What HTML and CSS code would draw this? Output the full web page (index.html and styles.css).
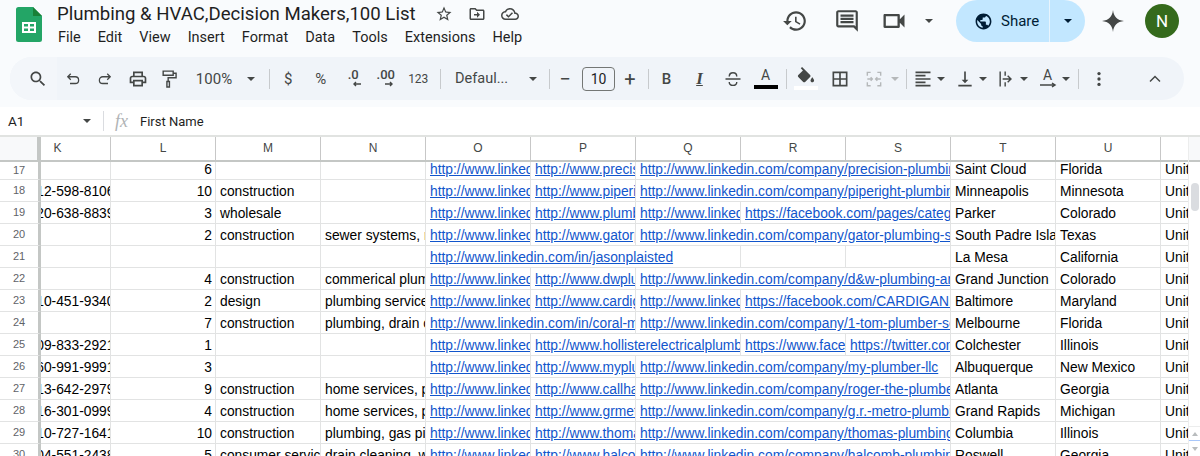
FILE: index.html
```html
<!DOCTYPE html>
<html>
<head>
  <meta charset="utf-8">
  <title>Plumbing &amp; HVAC,Decision Makers,100 List</title>
  <link rel="stylesheet" href="styles.css">
</head>
<body>
  <!-- title and menus -->
  <div class="top">
    <svg class="logo" viewBox="0 0 26 35">
      <path fill="#23a566" d="M2.500 0H17l9 9v23.500a2.500 2.500 0 0 1-2.500 2.500h-21A2.500 2.500 0 0 1 0 32.500v-30A2.500 2.500 0 0 1 2.500 0z"/>
      <path fill="#188038" d="M17 0l9 9h-9z"/>
      <path fill="#fff" d="M6 15h14v11H6zm2 2v2.500h4V17zm6 0v2.500h4V17zm-6 4.500V24h4v-2.500zm6 0V24h4v-2.500z"/>
    </svg>
    <div class="title-block">
      <div class="title-line">
        <span class="doc-title">Plumbing &amp; HVAC,Decision Makers,100 List</span>
        <svg class="title-icon" viewBox="0 0 24 24"><path d="M22 9.240l-7.190-.62L12 2 9.190 8.630 2 9.240l5.460 4.730L5.820 21 12 17.270 18.180 21l-1.630-7.030L22 9.240zM12 15.400l-3.760 2.270 1-4.280-3.320-2.880 4.380-.38L12 6.100l1.710 4.040 4.380.38-3.320 2.880 1 4.280L12 15.400z"/></svg>
        <svg class="title-icon" viewBox="0 0 24 24"><path d="M20 6h-8l-2-2H4c-1.100 0-2 .9-2 2v12c0 1.100.9 2 2 2h16c1.100 0 2-.9 2-2V8c0-1.100-.9-2-2-2zm0 12H4V6h5.170l2 2H20v10zm-8-4H8v-2h4V9l4 4-4 4v-3z"/></svg>
        <svg class="title-icon" viewBox="0 0 24 24"><path d="M19.350 10.040C18.670 6.590 15.640 4 12 4 9.110 4 6.600 5.640 5.350 8.040 2.340 8.360 0 10.910 0 14c0 3.310 2.690 6 6 6h13c2.760 0 5-2.240 5-5 0-2.640-2.050-4.780-4.650-4.960zM19 18H6c-2.210 0-4-1.790-4-4 0-2.050 1.530-3.760 3.560-3.970l1.070-.11.5-.95C8.080 7.140 9.940 6 12 6c2.620 0 4.880 1.860 5.390 4.430l.3 1.500 1.530.11c1.560.1 2.780 1.410 2.780 2.960 0 1.650-1.350 3-3 3zm-9-3.820l-2.090-2.090L6.500 13.500 10 17l6.010-6.010-1.410-1.410z"/></svg>
      </div>
      <div class="menu">
        <span>File</span><span>Edit</span><span>View</span><span>Insert</span><span>Format</span><span>Data</span><span>Tools</span><span>Extensions</span><span>Help</span>
      </div>
    </div>
    <div class="actions">
      <svg class="act-icon history" viewBox="0 0 24 24"><path d="M13 3c-4.970 0-9 4.030-9 9H1l3.890 3.890.07.14L9 12H6c0-3.870 3.130-7 7-7s7 3.130 7 7-3.130 7-7 7c-1.930 0-3.680-.79-4.940-2.060l-1.420 1.420C8.270 19.990 10.510 21 13 21c4.970 0 9-4.030 9-9s-4.030-9-9-9zm-1 5v5l4.280 2.540.72-1.210-3.500-2.080V8H12z"/></svg>
      <svg class="act-icon comment" viewBox="0 0 24 24"><path d="M20 2H4c-1.100 0-2 .9-2 2v12c0 1.100.9 2 2 2h14l4 4V4c0-1.100-.9-2-2-2zm0 15.170L18.830 16H4V4h16v13.170zM6 12h12v2H6zm0-3h12v2H6zm0-3h12v2H6z"/></svg>
      <svg class="act-icon video" viewBox="0 0 24 24"><path d="M15 8v8H5V8h10m1-2H4c-.55 0-1 .45-1 1v10c0 .55.45 1 1 1h12c.55 0 1-.45 1-1v-3.500l4 4v-11l-4 4V7c0-.55-.45-1-1-1z"/></svg>
      <span class="caret video-caret"></span>
      <div class="share">
        <div class="share-main">
          <svg viewBox="0 0 24 24"><path d="M12 2C6.480 2 2 6.480 2 12s4.480 10 10 10 10-4.480 10-10S17.520 2 12 2zm-1 17.930c-3.950-.49-7-3.850-7-7.930 0-.62.08-1.210.21-1.790L9 15v1c0 1.100.9 2 2 2v1.930zm6.900-2.540c-.26-.81-1-1.390-1.900-1.390h-1v-3c0-.55-.45-1-1-1H8v-2h2c.55 0 1-.45 1-1V7h2c1.100 0 2-.9 2-2v-.41c2.930 1.190 5 4.060 5 7.410 0 2.080-.8 3.970-2.100 5.390z"/></svg>
          <span>Share</span>
        </div>
        <div class="share-more"><span class="caret dark"></span></div>
      </div>
      <svg class="spark" viewBox="0 0 24 24"><path d="M12 1C12.800 7.800 16.200 11.200 23 12C16.200 12.800 12.800 16.200 12 23C11.200 16.200 7.800 12.800 1 12C7.800 11.200 11.200 7.800 12 1z"/></svg>
      <div class="avatar">N</div>
    </div>
  </div>

  <!-- toolbar -->
  <div class="toolbar">
    <div class="group g1">
      <div class="tb search-slot"><svg class="ic" viewBox="0 0 24 24"><path d="M15.500 14h-.79l-.28-.27C15.410 12.590 16 11.110 16 9.500 16 5.910 13.090 3 9.500 3S3 5.910 3 9.500 5.910 16 9.500 16c1.610 0 3.090-.59 4.230-1.570l.27.28v.79l5 4.990L20.490 19l-4.990-5zm-6 0C7.010 14 5 11.990 5 9.500S7.010 5 9.500 5 14 7.010 14 9.500 11.990 14 9.500 14z"/></svg></div>
      <div class="tb w32"><svg class="ic line small" viewBox="0 0 24 24"><path d="M9 5L5 9l4 4M5 9h10a4.500 4.500 0 0 1 0 9H8"/></svg></div>
      <div class="tb w32"><svg class="ic line small" viewBox="0 0 24 24"><path d="M15 5l4 4-4 4M19 9H9a4.500 4.500 0 0 0 0 9h7"/></svg></div>
      <div class="tb w33"><svg class="ic" viewBox="0 0 24 24"><path d="M19 8h-1V3H6v5H5c-1.660 0-3 1.340-3 3v6h4v4h12v-4h4v-6c0-1.660-1.340-3-3-3zM8 5h8v3H8V5zm8 12v2H8v-4h8v2zm2-2v-2H6v2H4v-4c0-.55.45-1 1-1h14c.55 0 1 .45 1 1v4h-2z"/></svg></div>
      <div class="tb w30"><svg class="ic line" viewBox="0 0 24 24"><path d="M5 2.500h12v5H5zM17 5h3.500v5.500H11V15M9.500 15h3v6.500h-3z"/></svg></div>
      <div class="tb zoom-val">100%</div>
      <div class="tb w8"><span class="caret"></span></div>
    </div>
    <div class="sep"></div>
    <div class="group g2">
      <div class="tb w325 sym">$</div>
      <div class="tb w325 sym">%</div>
      <div class="tb w325 dec"><span>.0</span><svg class="arrow-l" viewBox="0 0 10 6"><path d="M9 3H2M4 1L2 3l2 2"/></svg></div>
      <div class="tb w325 dec"><span>.00</span><svg class="arrow-r" viewBox="0 0 10 6"><path d="M1 3h7M6 1l2 2-2 2"/></svg></div>
      <div class="tb w325 num">123</div>
    </div>
    <div class="sep"></div>
    <div class="group g3">
      <div class="tb font-name">Defaul...</div>
      <div class="tb w16"><span class="caret"></span></div>
    </div>
    <div class="sep"></div>
    <div class="group g4">
      <div class="tb w30 pm">&minus;</div>
      <div class="size-box">10</div>
      <div class="tb w30 pm">+</div>
    </div>
    <div class="sep"></div>
    <div class="group g5">
      <div class="tb w33 fmt bold">B</div>
      <div class="tb w33 fmt ital">I</div>
      <div class="tb w33"><svg class="ic line" viewBox="0 0 24 24"><path d="M3 12h18M7.500 9c0-6 9-6 9 0M7.500 15.500c0 5.500 9 5.500 9 0"/></svg></div>
      <div class="tb w33 color-a"><span>A</span><i></i></div>
    </div>
    <div class="sep"></div>
    <div class="group g6">
      <div class="tb w34 fill">
        <svg viewBox="0 0 24 20"><path d="M16.560 8.940L7.620 0 6.210 1.410l2.380 2.380-5.150 5.150c-.59.59-.59 1.540 0 2.120l5.500 5.500c.29.29.68.44 1.060.44s.77-.15 1.060-.44l5.500-5.500c.59-.58.59-1.530 0-2.120zM19 11.500s-2 2.170-2 3.500c0 1.100.9 2 2 2s2-.9 2-2c0-1.330-2-3.500-2-3.500z"/></svg>
        <i></i>
      </div>
      <div class="tb w34"><svg class="ic" viewBox="0 0 24 24"><path d="M3 3v18h18V3H3zm8 16H5v-6h6v6zm0-8H5V5h6v6zm8 8h-6v-6h6v6zm0-8h-6V5h6v6z"/></svg></div>
      <div class="tb w34"><svg class="ic line off" viewBox="0 0 24 24"><path d="M8 4H4v4M8 20H4v-4M16 4h4v4M16 20h4v-4M4 12h6M8 10l2 2-2 2M20 12h-6M16 10l-2 2 2 2"/></svg></div>
      <div class="tb w8"><span class="caret off"></span></div>
    </div>
    <div class="sep"></div>
    <div class="group g7">
      <div class="pick">
        <svg class="ic" viewBox="0 0 24 24"><path d="M15 15H3v2h12v-2zm0-8H3v2h12V7zM3 13h18v-2H3v2zm0 8h18v-2H3v2zM3 3v2h18V3H3z"/></svg>
        <span class="caret"></span>
      </div>
      <div class="pick">
        <svg class="ic" viewBox="0 0 24 24"><path d="M16 13h-3V3h-2v10H8l4 4 4-4zM4 19v2h16v-2H4z"/></svg>
        <span class="caret"></span>
      </div>
      <div class="pick">
        <svg class="ic line" viewBox="0 0 24 24"><path d="M5 3v18M11 3v5M11 11v2M11 16v5M8 12h10M14 8l4 4-4 4"/></svg>
        <span class="caret"></span>
      </div>
      <div class="pick">
        <div class="rotate"><span>A</span><svg viewBox="0 0 18 6"><path d="M1 3h15M13 1l3 2-3 2"/></svg></div>
        <span class="caret"></span>
      </div>
    </div>
    <div class="sep"></div>
    <div class="group g8">
      <div class="tb w40"><svg class="ic" viewBox="0 0 24 24"><circle cx="12" cy="5.500" r="2"/><circle cx="12" cy="12" r="2"/><circle cx="12" cy="18.500" r="2"/></svg></div>
      <div class="tb collapse"><svg class="ic line" viewBox="0 0 24 24"><path d="M6 15l6-6 6 6"/></svg></div>
    </div>
  </div>

  <!-- name box and formula -->
  <div class="formula-bar">
    <div class="name-box"><span>A1</span><span class="caret"></span></div>
    <div class="fx-sep"></div>
    <span class="fx">fx</span>
    <span class="formula">First Name</span>
  </div>

  <!-- sheet -->
  <div class="sheet">
    <div class="grid">
      <div class="row head">
        <div class="corner"></div>
        <div class="k-head">K</div><div>L</div><div>M</div><div>N</div><div>O</div><div>P</div><div>Q</div><div>R</div><div>S</div><div>T</div><div>U</div><div></div>
      </div>

      <div class="row first">
        <div class="rh">17</div><div class="c"></div><div class="c n">6</div><div class="c"></div><div class="c"></div>
        <div class="c"><a>http://www.linkedin.com/in/kevin</a></div>
        <div class="c"><a>http://www.precisionplumbing.com</a></div>
        <div class="c s3"><a>http://www.linkedin.com/company/precision-plumbing-inc</a></div>
        <div class="c">Saint Cloud</div><div class="c">Florida</div><div class="c">United States</div>
      </div>
      <div class="row">
        <div class="rh">18</div><div class="c ph"><span>612-598-8106</span></div><div class="c n">10</div><div class="c">construction</div><div class="c"></div>
        <div class="c"><a>http://www.linkedin.com/in/dan</a></div>
        <div class="c"><a>http://www.piperightplumbing.com</a></div>
        <div class="c s3"><a>http://www.linkedin.com/company/piperight-plumbing-inc</a></div>
        <div class="c">Minneapolis</div><div class="c">Minnesota</div><div class="c">United States</div>
      </div>
      <div class="row">
        <div class="rh">19</div><div class="c ph"><span>720-638-8839</span></div><div class="c n">3</div><div class="c">wholesale</div><div class="c"></div>
        <div class="c"><a>http://www.linkedin.com/in/mark</a></div>
        <div class="c"><a>http://www.plumbersupply.com</a></div>
        <div class="c"><a>http://www.linkedin.com/company/plumb</a></div>
        <div class="c s2"><a>https://facebook.com/pages/category/plumbing</a></div>
        <div class="c">Parker</div><div class="c">Colorado</div><div class="c">United States</div>
      </div>
      <div class="row">
        <div class="rh">20</div><div class="c"></div><div class="c n">2</div><div class="c">construction</div><div class="c">sewer systems, manholes</div>
        <div class="c"><a>http://www.linkedin.com/in/jose</a></div>
        <div class="c"><a>http://www.gatorplumbing.com</a></div>
        <div class="c s3"><a>http://www.linkedin.com/company/gator-plumbing-services</a></div>
        <div class="c">South Padre Island</div><div class="c">Texas</div><div class="c">United States</div>
      </div>
      <div class="row">
        <div class="rh">21</div><div class="c"></div><div class="c"></div><div class="c"></div><div class="c"></div>
        <div class="c s3"><a>http://www.linkedin.com/in/jasonplaisted</a></div>
        <div class="c"></div><div class="c"></div>
        <div class="c">La Mesa</div><div class="c">California</div><div class="c">United States</div>
      </div>
      <div class="row">
        <div class="rh">22</div><div class="c"></div><div class="c n">4</div><div class="c">construction</div><div class="c">commerical plumbing</div>
        <div class="c"><a>http://www.linkedin.com/in/wade</a></div>
        <div class="c"><a>http://www.dwplumbing.com</a></div>
        <div class="c s3"><a>http://www.linkedin.com/company/d&amp;w-plumbing-and-heating</a></div>
        <div class="c">Grand Junction</div><div class="c">Colorado</div><div class="c">United States</div>
      </div>
      <div class="row">
        <div class="rh">23</div><div class="c ph"><span>410-451-9340</span></div><div class="c n">2</div><div class="c">design</div><div class="c">plumbing services</div>
        <div class="c"><a>http://www.linkedin.com/in/bill</a></div>
        <div class="c"><a>http://www.cardiganplumbing.com</a></div>
        <div class="c"><a>http://www.linkedin.com/company/cardigan</a></div>
        <div class="c s2"><a>https://facebook.com/CARDIGAN.PLUMBING</a></div>
        <div class="c">Baltimore</div><div class="c">Maryland</div><div class="c">United States</div>
      </div>
      <div class="row">
        <div class="rh">24</div><div class="c"></div><div class="c n">7</div><div class="c">construction</div><div class="c">plumbing, drain cleaning</div>
        <div class="c s2"><a>http://www.linkedin.com/in/coral-mcgee</a></div>
        <div class="c s3"><a>http://www.linkedin.com/company/1-tom-plumber-services</a></div>
        <div class="c">Melbourne</div><div class="c">Florida</div><div class="c">United States</div>
      </div>
      <div class="row">
        <div class="rh">25</div><div class="c ph"><span>309-833-2921</span></div><div class="c n">1</div><div class="c"></div><div class="c"></div>
        <div class="c"><a>http://www.linkedin.com/in/rick</a></div>
        <div class="c s2"><a>http://www.hollisterelectricalplumbing.com</a></div>
        <div class="c"><a>https://www.facebook.com/hollister</a></div>
        <div class="c"><a>https://twitter.com/hollister</a></div>
        <div class="c">Colchester</div><div class="c">Illinois</div><div class="c">United States</div>
      </div>
      <div class="row">
        <div class="rh">26</div><div class="c ph"><span>560-991-9991</span></div><div class="c n">3</div><div class="c"></div><div class="c"></div>
        <div class="c"><a>http://www.linkedin.com/in/chris</a></div>
        <div class="c"><a>http://www.myplumberllc.com</a></div>
        <div class="c s3"><a>http://www.linkedin.com/company/my-plumber-llc</a></div>
        <div class="c">Albuquerque</div><div class="c">New Mexico</div><div class="c">United States</div>
      </div>
      <div class="row">
        <div class="rh">27</div><div class="c ph"><span>813-642-2979</span></div><div class="c n">9</div><div class="c">construction</div><div class="c">home services, plumbing</div>
        <div class="c"><a>http://www.linkedin.com/in/roger</a></div>
        <div class="c"><a>http://www.callhannah.com</a></div>
        <div class="c s3"><a>http://www.linkedin.com/company/roger-the-plumber-inc</a></div>
        <div class="c">Atlanta</div><div class="c">Georgia</div><div class="c">United States</div>
      </div>
      <div class="row">
        <div class="rh">28</div><div class="c ph"><span>616-301-0999</span></div><div class="c n">4</div><div class="c">construction</div><div class="c">home services, plumbing</div>
        <div class="c"><a>http://www.linkedin.com/in/greg</a></div>
        <div class="c"><a>http://www.grmetroplumbing.com</a></div>
        <div class="c s3"><a>http://www.linkedin.com/company/g.r.-metro-plumbing-inc</a></div>
        <div class="c">Grand Rapids</div><div class="c">Michigan</div><div class="c">United States</div>
      </div>
      <div class="row">
        <div class="rh">29</div><div class="c ph"><span>410-727-1641</span></div><div class="c n">10</div><div class="c">construction</div><div class="c">plumbing, gas piping</div>
        <div class="c"><a>http://www.linkedin.com/in/tom</a></div>
        <div class="c"><a>http://www.thomasplumbing.com</a></div>
        <div class="c s3"><a>http://www.linkedin.com/company/thomas-plumbing-inc</a></div>
        <div class="c">Columbia</div><div class="c">Illinois</div><div class="c">United States</div>
      </div>
      <div class="row">
        <div class="rh">30</div><div class="c ph"><span>404-551-2438</span></div><div class="c n">5</div><div class="c">consumer services</div><div class="c">drain cleaning, water</div>
        <div class="c"><a>http://www.linkedin.com/in/sam</a></div>
        <div class="c"><a>http://www.halcombplumbing.com</a></div>
        <div class="c s3"><a>http://www.linkedin.com/company/halcomb-plumbing-inc</a></div>
        <div class="c">Roswell</div><div class="c">Georgia</div><div class="c">United States</div>
      </div>
    </div>

    <div class="scrollbar">
      <div class="sb-head"></div>
      <div class="thumb"></div>
      <div class="sb-arrows">
        <span class="arrow-up"></span>
        <span class="sb-mark"></span>
        <span class="arrow-down"></span>
      </div>
    </div>
  </div>
</body>
</html>
```
FILE: styles.css
```css
html, body {
  margin: 0;
  height: 456px;
  overflow: hidden;
  background-color: #f9fbfd;
  font-family: Roboto, "Liberation Sans", sans-serif;
  color: #1f1f1f;
}

/* title row */
.top {
  display: flex;
  height: 57px;
}

.logo {
  width: 26px;
  height: 35px;
  margin: 7px 0 0 16px;
}

.title-block {
  margin-left: 15px;
}

.title-line {
  display: flex;
  align-items: center;
  height: 28px;
}

.doc-title {
  font-size: 18.600px;
  width: 359px;
  white-space: nowrap;
}

.title-icon {
  width: 18px;
  height: 18px;
  margin-right: 15px;
  fill: #444746;
}

.title-line .doc-title + .title-icon {
  margin-left: 19px;
}

.menu {
  display: flex;
  gap: 17px;
  font-size: 14.500px;
  line-height: 16px;
  margin: 2px 0 0 1px;
}

.actions {
  position: absolute;
  top: 0;
  left: 782px;
  display: flex;
  align-items: center;
  height: 42px;
}

.act-icon {
  width: 26px;
  height: 26px;
  fill: #444746;
  flex-shrink: 0;
}

.comment {
  margin-left: 26px;
}

.video {
  margin-left: 20px;
  width: 28px;
  height: 28px;
}

.video-caret {
  margin-left: 17px;
}

.share {
  display: flex;
  width: 129px;
  height: 42px;
  margin-left: 23px;
  border-radius: 21px;
  overflow: hidden;
  background-color: #c2e7ff;
  color: #001d35;
  font-size: 15px;
}

.share-main {
  display: flex;
  align-items: center;
  gap: 8px;
  width: 94px;
  padding-left: 18px;
  box-sizing: border-box;
  border-right: 1px solid #e8f4fd;
}

.share-main svg {
  width: 19px;
  height: 19px;
  fill: #001d35;
}

.share-more {
  flex: 1;
  display: flex;
  align-items: center;
  justify-content: center;
}

.spark {
  width: 24px;
  height: 24px;
  margin-left: 16px;
  fill: #444746;
}

.avatar {
  width: 34px;
  height: 34px;
  margin-left: 20px;
  border-radius: 50%;
  background-color: #356a1c;
  color: #fff;
  font-size: 17px;
  line-height: 34px;
  text-align: center;
}

.caret {
  display: inline-block;
  width: 0;
  height: 0;
  border-left: 4px solid transparent;
  border-right: 4px solid transparent;
  border-top: 4px solid #444746;
}

.caret.dark {
  border-top-color: #001d35;
}

.caret.off {
  border-top-color: #b5b8ba;
}

/* toolbar */
.toolbar {
  display: flex;
  align-items: center;
  height: 43px;
  margin: 0 16px 7px 10px;
  border-radius: 22px;
  background-color: #f0f4f9;
  color: #444746;
  overflow: hidden;
}

.group {
  display: flex;
  align-items: center;
  height: 100%;
  flex-shrink: 0;
}

.g1 { width: 259px; }
.g2 { width: 170px; padding-left: 2px; box-sizing: border-box; }
.g3 { width: 108px; }
.g4 { width: 98px; }
.g5 { width: 137px; padding-left: 1px; box-sizing: border-box; }
.g6 { width: 119px; padding-left: 2px; box-sizing: border-box; }
.g7 { width: 171px; padding-left: 6px; gap: 9.500px; box-sizing: border-box; }
.g8 { flex: 1; }

.sep {
  width: 1px;
  height: 20px;
  background-color: #c7cacd;
  flex-shrink: 0;
}

.tb {
  display: flex;
  align-items: center;
  justify-content: center;
  height: 100%;
  flex-shrink: 0;
}

.w8 { width: 8px; }
.w16 { width: 16px; }
.w30 { width: 30px; }
.w32 { width: 32px; }
.w325 { width: 32.500px; }
.w33 { width: 33px; }
.w34 { width: 34px; }
.w40 { width: 40px; }

.search-slot {
  width: 47px;
  padding-left: 9px;
  box-sizing: border-box;
  background-color: #f3f6fa;
}

.ic {
  width: 20px;
  height: 20px;
  fill: #444746;
  flex-shrink: 0;
}

.ic.small {
  width: 18px;
  height: 18px;
}

.ic.line {
  fill: none;
  stroke: #444746;
  stroke-width: 1.700;
}

.ic.off {
  stroke: #b5b8ba;
}

.zoom-val {
  width: 63px;
  padding-right: 3px;
  box-sizing: border-box;
  font-size: 15px;
}

.sym {
  font-size: 15px;
}

.num {
  font-size: 12px;
}

.dec {
  flex-direction: column;
  font-size: 13px;
  font-weight: 500;
  line-height: 12px;
  padding-bottom: 2px;
  box-sizing: border-box;
}

.dec svg {
  width: 10px;
  height: 6px;
  fill: none;
  stroke: #444746;
  stroke-width: 1.400;
}

.arrow-l {
  margin-left: 8px;
}

.arrow-r {
  margin-left: 6px;
}

.font-name {
  width: 84px;
  justify-content: flex-start;
  padding-left: 14px;
  box-sizing: border-box;
  font-size: 14.500px;
}

.pm {
  font-size: 20px;
}

.size-box {
  width: 33px;
  height: 24px;
  margin-left: 2px;
  box-sizing: border-box;
  border: 1px solid #747775;
  border-radius: 4px;
  font-size: 14px;
  line-height: 22px;
  text-align: center;
  color: #1f1f1f;
}

.fmt {
  font-size: 15px;
}

.bold {
  font-weight: 500;
}

.ital {
  font-family: "Liberation Serif", serif;
  font-style: italic;
  font-size: 17px;
  font-weight: 700;
  text-decoration: underline;
  text-decoration-thickness: 1px;
  text-underline-offset: 1px;
}

.color-a {
  flex-direction: column;
  font-size: 14px;
  line-height: 15px;
}

.color-a i {
  display: block;
  width: 24px;
  height: 4px;
  margin-top: 2px;
  background-color: #000;
}

.fill {
  flex-direction: column;
}

.fill svg {
  width: 22px;
  height: 18px;
  fill: #444746;
}

.fill i {
  display: block;
  width: 24px;
  height: 4px;
  margin-top: 1px;
  background-color: #fff;
}

.pick {
  display: flex;
  align-items: center;
  gap: 4px;
}

.rotate {
  display: flex;
  flex-direction: column;
  align-items: center;
  width: 20px;
  font-size: 14px;
  line-height: 13px;
}

.rotate svg {
  width: 18px;
  height: 6px;
  fill: none;
  stroke: #444746;
  stroke-width: 1.500;
}

.collapse {
  width: 34px;
  margin-left: auto;
  margin-right: 12px;
}

/* formula bar */
.formula-bar {
  display: flex;
  align-items: center;
  height: 28px;
  background-color: #fff;
  border-bottom: 2px solid #e1e3e1;
}

.name-box {
  display: flex;
  align-items: center;
  justify-content: space-between;
  width: 83px;
  padding-left: 8px;
  font-size: 13.500px;
}

.fx-sep {
  width: 1px;
  height: 20px;
  margin-left: 12px;
  background-color: #dadce0;
}

.fx {
  width: 18px;
  margin-left: 11px;
  font-family: "Liberation Serif", serif;
  font-style: italic;
  font-size: 18px;
  color: #b0b3b5;
}

.formula {
  margin-left: 7px;
  font-size: 13px;
}

/* sheet */
.sheet {
  display: flex;
  height: 319px;
  overflow: hidden;
  background-color: #fff;
}

.grid {
  width: 1188px;
  flex-shrink: 0;
}

.row {
  display: grid;
  grid-template-columns: 41px 70px repeat(10, 105px) 27px;
  height: 22px;
  font-family: "Liberation Sans", Arial, sans-serif;
  font-size: 13.800px;
  line-height: 21px;
  color: #000;
}

.row.first {
  height: 18px;
  line-height: 16px;
}

.row.head {
  height: 25px;
  border-bottom: 2px solid #c4c7c5;
  box-sizing: border-box;
  font-size: 12px;
  line-height: 23px;
  text-align: center;
  color: #444746;
}

.row.head > div {
  border-right: 1px solid #c7c7c7;
  box-sizing: border-box;
}

.row.head > div:last-child {
  border-right: none;
}

.row.head > .corner {
  background-color: #f8f9fa;
  border-right: 4px solid #c4c7c5;
}

/* column K is scrolled partly under the frozen pane */
.row.head > .k-head {
  padding-right: 36px;
}

.rh {
  border-right: 3px solid #c4c7c5;
  border-bottom: 1px solid #e2e3e3;
  box-sizing: border-box;
  font-size: 11px;
  text-align: center;
  color: #5f6368;
  background-color: #fff;
}

.c {
  min-width: 0;
  padding-left: 4px;
  border-right: 1px solid #e2e3e3;
  border-bottom: 1px solid #e2e3e3;
  box-sizing: border-box;
  overflow: hidden;
  white-space: nowrap;
}

.row:not(.first) .c {
  padding-top: 1px;
}

.c:last-child {
  border-right: none;
}

.c a {
  color: #1155cc;
  text-decoration: underline;
}

.n {
  padding-right: 3px;
  text-align: right;
}

/* long phone numbers get clipped on both sides */
.ph {
  display: flex;
  justify-content: center;
  padding-left: 0;
  padding-right: 8px;
}

.ph span {
  flex-shrink: 0;
}

.s2 {
  grid-column: span 2;
}

.s3 {
  grid-column: span 3;
}

/* scrollbar */
.scrollbar {
  flex: 1;
  display: flex;
  flex-direction: column;
  border-left: 1px solid #eceded;
  box-sizing: border-box;
}

.sb-head {
  height: 25px;
  background-color: #f8f9fa;
  border-bottom: 2px solid #c4c7c5;
  box-sizing: border-box;
}

.thumb {
  width: 8px;
  height: 28px;
  margin: 21px 0 0 2px;
  border-radius: 4px;
  background-color: #dadce0;
}

.sb-arrows {
  display: flex;
  flex-direction: column;
  align-items: center;
  height: 30px;
  margin-top: auto;
  padding-top: 5px;
  box-sizing: border-box;
  border-top: 1px solid #eceded;
}

.arrow-up {
  width: 0;
  height: 0;
  border-left: 3px solid transparent;
  border-right: 3px solid transparent;
  border-bottom: 4px solid #b9bcbe;
}

.sb-mark {
  width: 100%;
  height: 1px;
  margin: 4px 0 6px;
  background-color: #a8c7fa;
}

.arrow-down {
  width: 0;
  height: 0;
  border-left: 3px solid transparent;
  border-right: 3px solid transparent;
  border-top: 4px solid #b9bcbe;
}
```
